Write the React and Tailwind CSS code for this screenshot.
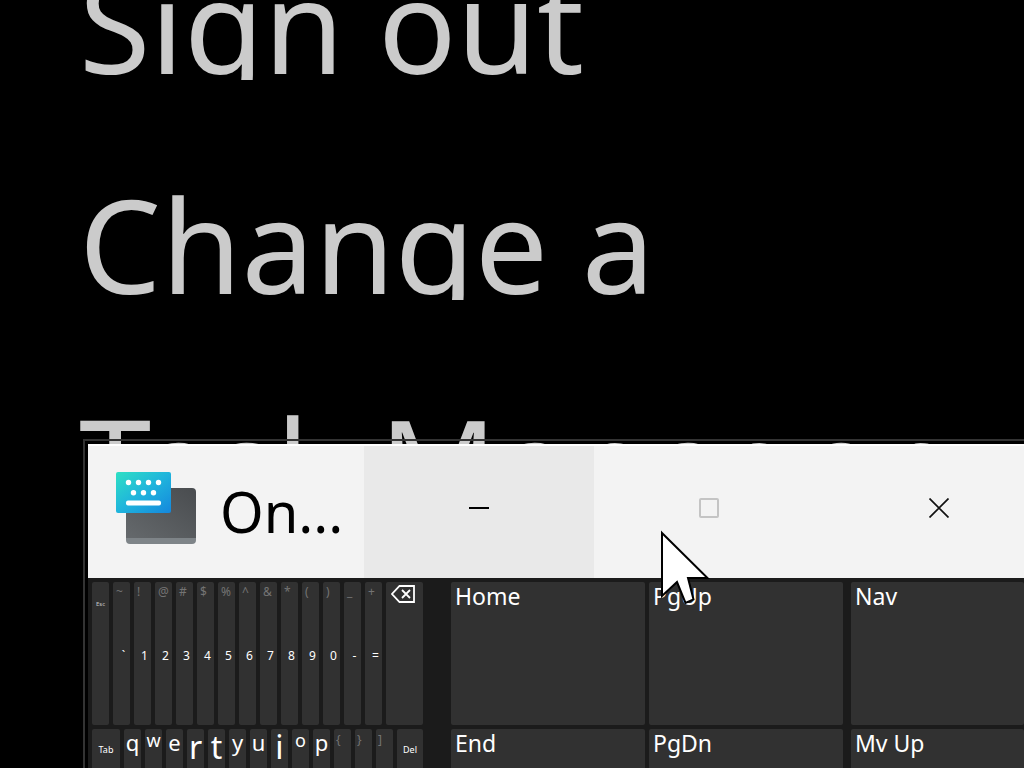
import { useState } from 'react';
import clsx from 'clsx';

const menuItems = ['Sign out', 'Change a', 'Task Manager'];

const numberKeys = [
  { shift: '~', base: '`' },
  { shift: '!', base: '1' },
  { shift: '@', base: '2' },
  { shift: '#', base: '3' },
  { shift: '$', base: '4' },
  { shift: '%', base: '5' },
  { shift: '^', base: '6' },
  { shift: '&', base: '7' },
  { shift: '*', base: '8' },
  { shift: '(', base: '9' },
  { shift: ')', base: '0' },
  { shift: '_', base: '-' },
  { shift: '+', base: '=' },
];

const letterKeys = [
  { label: 'q', size: 'text-[22px]' },
  { label: 'w', size: 'text-[18px]' },
  { label: 'e', size: 'text-[22px]' },
  { label: 'r', size: 'text-[32px]' },
  { label: 't', size: 'text-[32px]' },
  { label: 'y', size: 'text-[22px]' },
  { label: 'u', size: 'text-[22px]' },
  { label: 'i', size: 'text-[32px]' },
  { label: 'o', size: 'text-[18px]' },
  { label: 'p', size: 'text-[22px]' },
];

const bracketKeys = ['{', '}', ']'];

const navColumns = [
  ['Home', 'End'],
  ['PgUp', 'PgDn'],
];

const lastColumn = ['Nav', 'Mv Up'];

function Key({ className, children, ...props }) {
  return (
    <button
      type="button"
      className={clsx('h-[143px] shrink-0 overflow-hidden rounded-[2px] bg-[#313131]', className)}
      {...props}
    >
      {children}
    </button>
  );
}

function KeyboardLogo() {
  return (
    <svg className="h-[72px] w-20 shrink-0" viewBox="0 0 80 72" aria-hidden="true">
      <defs>
        <linearGradient id="panel" x1="0" y1="0" x2="1" y2="1">
          <stop offset="0" stopColor="#2ee0c4" />
          <stop offset="0.5" stopColor="#1fb4dc" />
          <stop offset="1" stopColor="#1487dd" />
        </linearGradient>
        <linearGradient id="base" x1="0" y1="1" x2="1" y2="0">
          <stop offset="0" stopColor="#65696c" />
          <stop offset="1" stopColor="#494c4f" />
        </linearGradient>
      </defs>
      <rect x="10" y="19" width="70" height="53" rx="4" fill="#7e8488" />
      <path d="M10 16h66a4 4 0 0 1 4 4v46H10z" fill="url(#base)" />
      <rect x="0" y="0" width="55" height="41" rx="2" fill="url(#panel)" />
      <g fill="#fff">
        <circle cx="12.500" cy="10.500" r="2.700" />
        <circle cx="22.500" cy="10.500" r="2.700" />
        <circle cx="32.500" cy="10.500" r="2.700" />
        <circle cx="42.500" cy="10.500" r="2.700" />
        <circle cx="17.500" cy="20.800" r="2.700" />
        <circle cx="27.500" cy="20.800" r="2.700" />
        <circle cx="37.500" cy="20.800" r="2.700" />
        <rect x="10" y="28.500" width="35" height="5" rx="2" />
      </g>
    </svg>
  );
}

function TitleBar() {
  const control = 'flex w-[230px] shrink-0 items-center justify-center pb-2';

  return (
    <header className="flex h-[134px] border-t-2 border-white bg-[#f3f3f3] text-black">
      <div className="flex w-[276px] shrink-0 items-center gap-6 pb-2 pl-7">
        <KeyboardLogo />
        <h1 className="pt-1.5 text-[56px] leading-none">On...</h1>
      </div>
      <button type="button" aria-label="Minimize" className={clsx(control, 'bg-[#e9e9e9]')}>
        <svg className="size-5" viewBox="0 0 20 20" stroke="#000" strokeWidth="2">
          <path d="M0 10h20" />
        </svg>
      </button>
      <button type="button" aria-label="Maximize" disabled className={control}>
        <svg className="size-5" viewBox="0 0 20 20" fill="none" stroke="#c4c4c4" strokeWidth="2">
          <rect x="1" y="1" width="18" height="18" rx="1" />
        </svg>
      </button>
      <button type="button" aria-label="Close" className={control}>
        <svg className="size-5" viewBox="0 0 20 20" stroke="#111" strokeWidth="1.700">
          <path d="M0.500 0.500l19 19M19.500 0.500l-19 19" />
        </svg>
      </button>
    </header>
  );
}

function MainKeys() {
  const [shift, setShift] = useState(false);

  return (
    <div className="flex shrink-0 flex-col gap-1">
      <div className="flex gap-1">
        <Key className="flex w-[17px] items-start justify-center pt-[18px] text-[6px] leading-[8px] text-[#c8c8c8]">
          Esc
        </Key>
        {numberKeys.map((key) => (
          <Key key={key.base} className="flex w-[17px] flex-col items-center pt-0.5">
            <span className="w-full pl-[3px] text-left text-xs leading-4 text-[#747474]">{key.shift}</span>
            <span className="mt-12 pl-1 text-xs leading-4">{key.base}</span>
          </Key>
        ))}
        <Key className="flex w-[37px] items-start justify-center pt-[3px] pr-[3px]" aria-label="Backspace">
          <svg className="h-[18px] w-6 shrink-0" viewBox="0 0 24 18" fill="none" stroke="#fff" strokeWidth="1.800">
            <path d="M8.500 1H23v16H8.500L1 9z" />
            <path d="M11 5l8 8M19 5l-8 8" />
          </svg>
        </Key>
      </div>
      <div className="flex gap-1">
        <Key className="flex w-7 items-start justify-center pt-[15px] text-[9px] leading-3">Tab</Key>
        {letterKeys.map((key) => (
          <Key
            key={key.label}
            onClick={() => setShift(!shift)}
            className={clsx('flex w-[17px] items-start justify-center pt-0.5 leading-none', key.size)}
          >
            {shift ? key.label.toUpperCase() : key.label}
          </Key>
        ))}
        {bracketKeys.map((label) => (
          <Key key={label} className="flex w-[17px] items-start pt-[3px] pl-0.5 text-xs leading-4 text-[#747474]">
            {label}
          </Key>
        ))}
        <Key className="flex w-[26px] items-start justify-center pt-[15px] text-[9px] leading-3">Del</Key>
      </div>
    </div>
  );
}

function NavColumn({ labels, className }) {
  return (
    <div className={clsx('flex flex-col gap-1', className)}>
      {labels.map((label) => (
        <Key key={label} className="flex items-start pl-1 text-[23px] leading-7">
          {label}
        </Key>
      ))}
    </div>
  );
}

function Pointer() {
  return (
    <svg
      className="pointer-events-none absolute top-[530px] left-[659px] h-20 w-14"
      viewBox="0 0 56 80"
      aria-hidden="true"
    >
      <path
        d="M3 3L48.500 48H29L34.500 69.500L26.500 73L18 52L3 66z"
        fill="#fff"
        stroke="#000"
        strokeWidth="2"
      />
    </svg>
  );
}

export default function App() {
  return (
    <div className="relative h-screen overflow-hidden bg-black font-['Noto_Sans',sans-serif]">
      {/* Security screen options */}
      <nav className="-mt-7 flex flex-col items-start gap-28 pl-[79px]">
        {menuItems.map((item) => (
          <button
            key={item}
            type="button"
            className="flex h-[108px] items-start overflow-hidden text-[130px] leading-[104px] whitespace-nowrap text-[#cbcbcb]"
          >
            {item}
          </button>
        ))}
      </nav>

      {/* On-screen keyboard */}
      <section
        aria-label="On-Screen Keyboard"
        className="absolute top-[439px] right-0 left-[83px] overflow-hidden border-t-2 border-l-2 border-[#333] pt-[3px] pl-[3px]"
      >
        <TitleBar />
        <div className="flex bg-[#1b1b1b] p-1 pr-0 text-white">
          <MainKeys />
          <div className="ml-7 flex min-w-0 flex-1 gap-1">
            {navColumns.map((labels) => (
              <NavColumn key={labels[0]} labels={labels} className="w-[194px] shrink-0" />
            ))}
            <NavColumn labels={lastColumn} className="ml-1 min-w-0 flex-1" />
          </div>
        </div>
      </section>

      <Pointer />
    </div>
  );
}
